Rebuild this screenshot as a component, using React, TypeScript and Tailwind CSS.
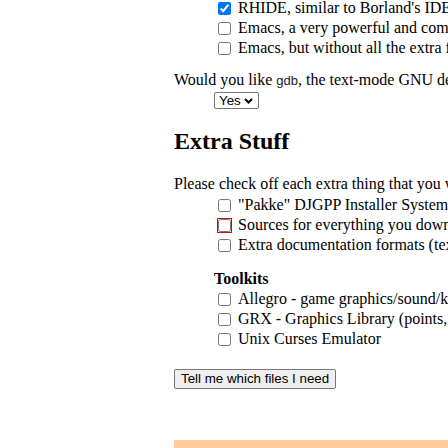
import { FC } from "react";

interface OptionRow {
  label: string;
  checked?: boolean;
  flagged?: boolean;
}

const editors: OptionRow[] = [
  { label: "RHIDE, similar to Borland's IDE, including a built-in editor and debugger.", checked: true },
  { label: "Emacs, a very powerful and complex editor that many people use." },
  { label: "Emacs, but without all the extra features like games and mail readers." },
];

const extras: OptionRow[] = [
  { label: '"Pakke" DJGPP Installer System' },
  { label: "Sources for everything you download", flagged: true },
  { label: "Extra documentation formats (texinfo, info, html, ps, dvi)" },
];

const toolkits: OptionRow[] = [
  { label: "Allegro - game graphics/sound/keyboard library" },
  { label: "GRX - Graphics Library (points, lines, text, fonts)" },
  { label: "Unix Curses Emulator" },
];

const CheckRow: FC<{ row: OptionRow }> = ({ row }) => {
  return (
    <label className="flex items-center h-[20px]">
      <input
        type="checkbox"
        defaultChecked={row.checked}
        className={
          row.flagged
            ? "m-0 ml-[4px] mr-[7px] w-[13px] h-[13px] outline outline-1 outline-[#e00000]"
            : "m-0 ml-[4px] mr-[7px] w-[13px] h-[13px]"
        }
      />
      <span className="leading-[18px]">{row.label}</span>
    </label>
  );
};

const FakeSelect = () => {
  return (
    <div className="ml-[40px] mt-[3px] h-[17px] w-[45px] border border-[#767676] rounded-[2px] bg-white flex items-center justify-between pl-[4px] pr-[5px] font-['Liberation_Sans',Arial,sans-serif] text-[13.33px] leading-[15px]">
      <span>Yes</span>
      <svg width="9" height="6" viewBox="0 0 9 6" fill="none">
        <path d="M1 1l3.5 3.5L8 1" stroke="#000" strokeWidth="2" />
      </svg>
    </div>
  );
};

export default function App() {
  return (
    <div className="w-[448px] h-[448px] overflow-hidden bg-white flex font-['Liberation_Serif','Times_New_Roman',serif] text-[16px] text-black">
      <div className="w-[174px] shrink-0" />
      <div className="flex-1 flex flex-col whitespace-nowrap mt-[-2px] min-w-0">
        <div className="ml-[40px]">
          {editors.map((row, index) => (
            <CheckRow key={index} row={row} />
          ))}
        </div>
        <p className="mt-[13px] h-[18px] leading-[18px]">
          Would you like{" "}
          <span className="font-['Liberation_Sans',Arial,sans-serif] text-[13px] text-[#222]">gdb</span>, the
          text-mode GNU debugger?
        </p>
        <FakeSelect />
        <h2 className="mt-[18px] h-[28px] leading-[28px] text-[24px] font-bold">Extra Stuff</h2>
        <p className="mt-[20px] h-[18px] leading-[18px]">Please check off each extra thing that you want.</p>
        <div className="ml-[40px] mt-[2px]">
          {extras.map((row, index) => (
            <CheckRow key={index} row={row} />
          ))}
        </div>
        <div className="ml-[40px] mt-[15px]">
          <p className="h-[18px] leading-[18px] font-bold">Toolkits</p>
          <div className="mt-[1px]">
            {toolkits.map((row, index) => (
              <CheckRow key={index} row={row} />
            ))}
          </div>
        </div>
        <div className="mt-[17px]">
          <button className="h-[20px] px-[6px] border border-[#767676] rounded-[2px] bg-[#efefef] font-['Liberation_Sans',Arial,sans-serif] text-[13.33px] leading-[16px] text-black">
            Tell me which files I need
          </button>
        </div>
        <div className="mt-[50px] h-[20px] bg-[#ffcc99] pl-[11px] pt-[3px]">
          <a href="#" className="font-['Liberation_Sans',Arial,sans-serif] text-[13px] font-bold text-[#0000ff] underline leading-[15px]">
            webmaster
          </a>
        </div>
      </div>
    </div>
  );
}
